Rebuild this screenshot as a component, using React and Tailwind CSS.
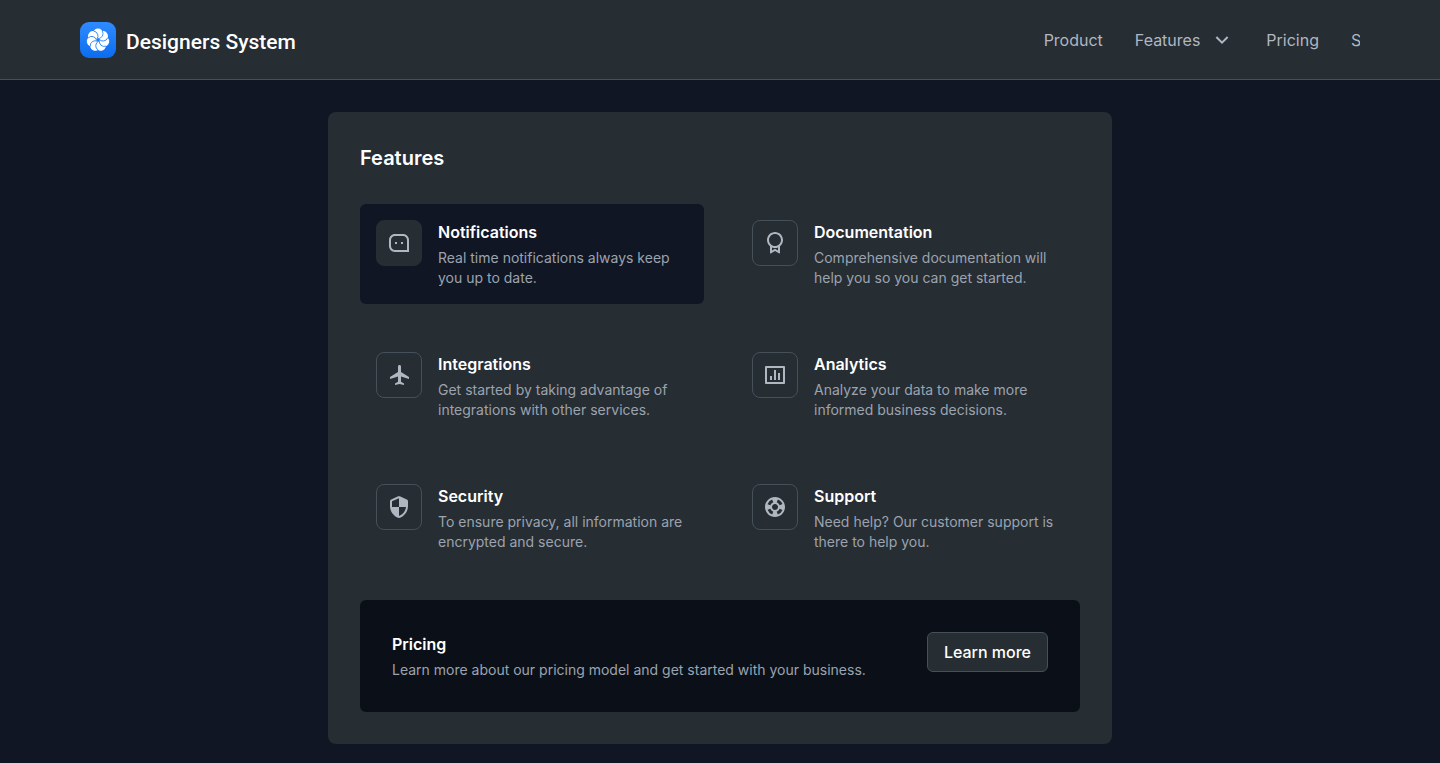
import {
  RiMessage3Line,
  RiAwardLine,
  RiPlaneFill,
  RiBarChartBoxLine,
  RiArrowDownSLine,
} from "react-icons/ri";
import { MdSupport } from "react-icons/md";

function ShieldIcon(props) {
  return (
    <svg viewBox="0 0 24 24" fill="currentColor" aria-hidden="true" {...props}>
      <path d="M11.19 1.36l-7 3.11C3.47 4.79 3 5.51 3 6.3V11c0 5.55 3.84 10.74 9 12 5.16-1.26 9-6.45 9-12V6.3c0-.79-.47-1.51-1.19-1.83l-7-3.11c-.51-.23-1.11-.23-1.62 0zM12 11.99h7c-.53 4.12-3.28 7.79-7 8.94V12H5V6.3l7-3.11v8.8z" />
    </svg>
  );
}

const petals = [0, 1, 2, 3, 4, 5, 6].map((i) => (i * 360) / 7);

function Logo() {
  return (
    <svg viewBox="0 0 36 36" className="size-9" aria-hidden="true">
      <defs>
        <linearGradient id="brand" x1="0" y1="0" x2="0" y2="1">
          <stop offset="0" stopColor="#2f8bff" />
          <stop offset="1" stopColor="#0b6cf0" />
        </linearGradient>
      </defs>
      <rect width="36" height="36" rx="9" fill="url(#brand)" />
      <g transform="translate(18 18)">
        {petals.map((angle) => (
          <circle key={angle} cy="-6.4" r="5" fill="#fff" transform={`rotate(${angle})`} />
        ))}
        {petals.map((angle) => (
          <path
            key={angle}
            transform={`rotate(${angle})`}
            fill="none"
            stroke="#1c7bfa"
            strokeWidth="0.8"
            d="M4.31 -8.95A5 5 0 0 1 0 -1.4"
          />
        ))}
      </g>
    </svg>
  );
}

const features = [
  {
    title: "Notifications",
    text: "Real time notifications always keep you up to date.",
    Icon: RiMessage3Line,
    active: true,
  },
  {
    title: "Documentation",
    text: "Comprehensive documentation will help you so you can get started.",
    Icon: RiAwardLine,
  },
  {
    title: "Integrations",
    text: "Get started by taking advantage of integrations with other services.",
    Icon: RiPlaneFill,
  },
  {
    title: "Analytics",
    text: "Analyze your data to make more informed business decisions.",
    Icon: RiBarChartBoxLine,
  },
  {
    title: "Security",
    text: "To ensure privacy, all information are encrypted and secure.",
    Icon: ShieldIcon,
  },
  {
    title: "Support",
    text: "Need help? Our customer support is there to help you.",
    Icon: MdSupport,
  },
];

function Feature({ title, text, Icon, active }) {
  return (
    <a
      href="#"
      className={`flex items-start gap-4 rounded-md p-4 ${active ? "bg-[#101624]" : ""}`}
    >
      <span
        className={`flex size-[46px] shrink-0 items-center justify-center rounded-lg border text-[#b0b7c1] ${
          active ? "border-[#262d33] bg-[#262d33]" : "border-[#465059]"
        }`}
      >
        <Icon className="size-6" />
      </span>
      <span className="flex flex-col gap-1">
        <span className="text-base font-semibold text-white">{title}</span>
        <span className="text-sm text-[#9ca3af]">{text}</span>
      </span>
    </a>
  );
}

export default function App() {
  return (
    <div className="min-h-screen bg-[#101624] font-['Inter',sans-serif]">
      <header className="flex h-20 items-center justify-between border-b border-[#465059] bg-[#262d33] px-20">
        <a href="#" className="flex items-end gap-2.5">
          <Logo />
          <span className="font-['Roboto',sans-serif] text-[21px] leading-8 font-medium text-white">
            Designers System
          </span>
        </a>
        <nav className="flex items-center gap-8 text-base text-[#b0b7c1]">
          <a href="#">Product</a>
          <button type="button" className="flex items-center gap-2.5">
            Features
            <RiArrowDownSLine className="size-6" />
          </button>
          <a href="#">Pricing</a>
          <a href="#" className="w-[9px] overflow-hidden">
            S
          </a>
        </nav>
      </header>
      <main className="px-4 pt-8 pb-5">
        <section className="mx-auto max-w-[784px] rounded-lg bg-[#262d33] p-8">
          <h2 className="text-xl leading-7 font-semibold text-white">Features</h2>
          <div className="mt-8 grid grid-cols-2 gap-8">
            {features.map((feature) => (
              <Feature key={feature.title} {...feature} />
            ))}
          </div>
          <div className="mt-8 flex items-start justify-between rounded-md bg-[#0b1018] p-8">
            <div className="flex flex-col gap-1">
              <h3 className="text-base font-semibold text-white">Pricing</h3>
              <p className="text-sm text-[#9ca3af]">
                Learn more about our pricing model and get started with your business.
              </p>
            </div>
            <button
              type="button"
              className="h-10 rounded-md border border-[#465059] bg-[#262d33] px-4 text-base font-medium text-white"
            >
              Learn more
            </button>
          </div>
        </section>
      </main>
    </div>
  );
}
